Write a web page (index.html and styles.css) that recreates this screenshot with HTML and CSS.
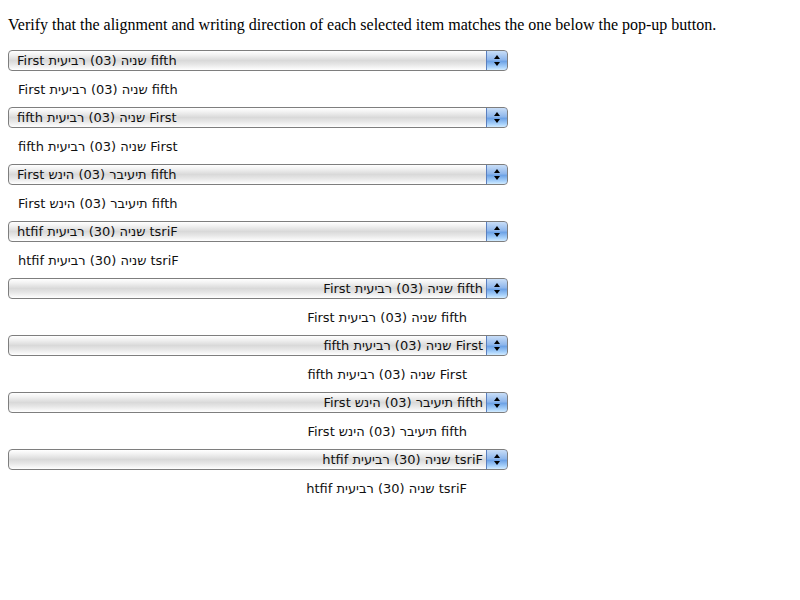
FILE: index.html
```html
<!DOCTYPE html>
<html>
<head>
<meta charset="utf-8">
<link rel="stylesheet" href="styles.css">
</head>
<body>
<p class="intro">Verify that the alignment and writing direction of each selected item matches the one below the pop-up button.</p>
<div class="list">
  <div class="popup left"><span class="value ltr">First שניה (03) רביעית fifth</span><span class="arrows"><i class="up"></i><i class="down"></i></span></div>
  <div class="label left ltr">First שניה (03) רביעית fifth</div>

  <div class="popup left"><span class="value rtl">First שניה (03) רביעית fifth</span><span class="arrows"><i class="up"></i><i class="down"></i></span></div>
  <div class="label left rtl">First שניה (03) רביעית fifth</div>

  <div class="popup left"><span class="value ltr-o">First שניה (03) רביעית fifth</span><span class="arrows"><i class="up"></i><i class="down"></i></span></div>
  <div class="label left ltr-o">First שניה (03) רביעית fifth</div>

  <div class="popup left"><span class="value rtl-o">First שניה (03) רביעית fifth</span><span class="arrows"><i class="up"></i><i class="down"></i></span></div>
  <div class="label left rtl-o">First שניה (03) רביעית fifth</div>

  <div class="popup right"><span class="value ltr">First שניה (03) רביעית fifth</span><span class="arrows"><i class="up"></i><i class="down"></i></span></div>
  <div class="label right ltr">First שניה (03) רביעית fifth</div>

  <div class="popup right"><span class="value rtl">First שניה (03) רביעית fifth</span><span class="arrows"><i class="up"></i><i class="down"></i></span></div>
  <div class="label right rtl">First שניה (03) רביעית fifth</div>

  <div class="popup right"><span class="value ltr-o">First שניה (03) רביעית fifth</span><span class="arrows"><i class="up"></i><i class="down"></i></span></div>
  <div class="label right ltr-o">First שניה (03) רביעית fifth</div>

  <div class="popup right"><span class="value rtl-o">First שניה (03) רביעית fifth</span><span class="arrows"><i class="up"></i><i class="down"></i></span></div>
  <div class="label right rtl-o">First שניה (03) רביעית fifth</div>
</div>
</body>
</html>
```

FILE: styles.css
```css
html, body {
  background: #ffffff;
}
body {
  margin: 0;
  padding: 8px;
  font-family: "Liberation Serif", serif;
  font-size: 16px;
  color: #000;
}
.intro {
  margin: 8px 0 16px;
  line-height: 18px;
}
.list {
  width: 500px;
  display: flex;
  flex-direction: column;
}
.popup {
  height: 21px;
  box-sizing: border-box;
  border: 1px solid #7e7e7e;
  border-radius: 4px;
  background: linear-gradient(to bottom, #ffffff 0%, #f2f2f2 20%, #d9d9d9 50%, #e6e6e6 70%, #ffffff 100%);
  display: flex;
  align-items: stretch;
  font-family: "DejaVu Sans", sans-serif;
  font-size: 13px;
  line-height: 19px;
  color: #111;
  overflow: hidden;
}
.popup .value {
  flex: 1;
  padding: 0 3px 0 8px;
  white-space: nowrap;
}
.popup.left .value { text-align: left; }
.popup.right .value { text-align: right; }
.arrows {
  width: 20px;
  border-left: 1px solid #5a7fbf;
  margin: -1px -1px -1px 0;
  border-radius: 0 4px 4px 0;
  border-top: 1px solid #3e62a8;
  border-right: 1px solid #3e62a8;
  border-bottom: 1px solid #3e62a8;
  background: linear-gradient(to bottom, #c9def7 0%, #8fb7ec 45%, #6ea3e6 55%, #a9d2fb 85%, #d3ecff 100%);
  display: flex;
  flex-direction: column;
  align-items: center;
  justify-content: center;
  gap: 3px;
}
.arrows i {
  display: block;
  width: 0;
  height: 0;
  border-left: 3px solid transparent;
  border-right: 3px solid transparent;
}
.arrows .up { border-bottom: 4px solid #000; }
.arrows .down { border-top: 4px solid #000; }
.label {
  font-family: "DejaVu Sans", sans-serif;
  font-size: 13px;
  padding-top: 1px;
  line-height: 35px;
  height: 35px;
  color: #111;
  white-space: nowrap;
}
.label.left { padding-left: 10px; text-align: left; }
.label.right { padding-right: 41px; text-align: right; }
.ltr { direction: ltr; unicode-bidi: embed; }
.rtl { direction: rtl; unicode-bidi: embed; }
.ltr-o { direction: ltr; unicode-bidi: bidi-override; }
.rtl-o { direction: rtl; unicode-bidi: bidi-override; }
.popup.left .rtl, .popup.left .rtl-o, .label.left.rtl, .label.left.rtl-o { text-align: left; }
.popup.right .ltr, .popup.right .ltr-o, .label.right.ltr, .label.right.ltr-o { text-align: right; }
```
